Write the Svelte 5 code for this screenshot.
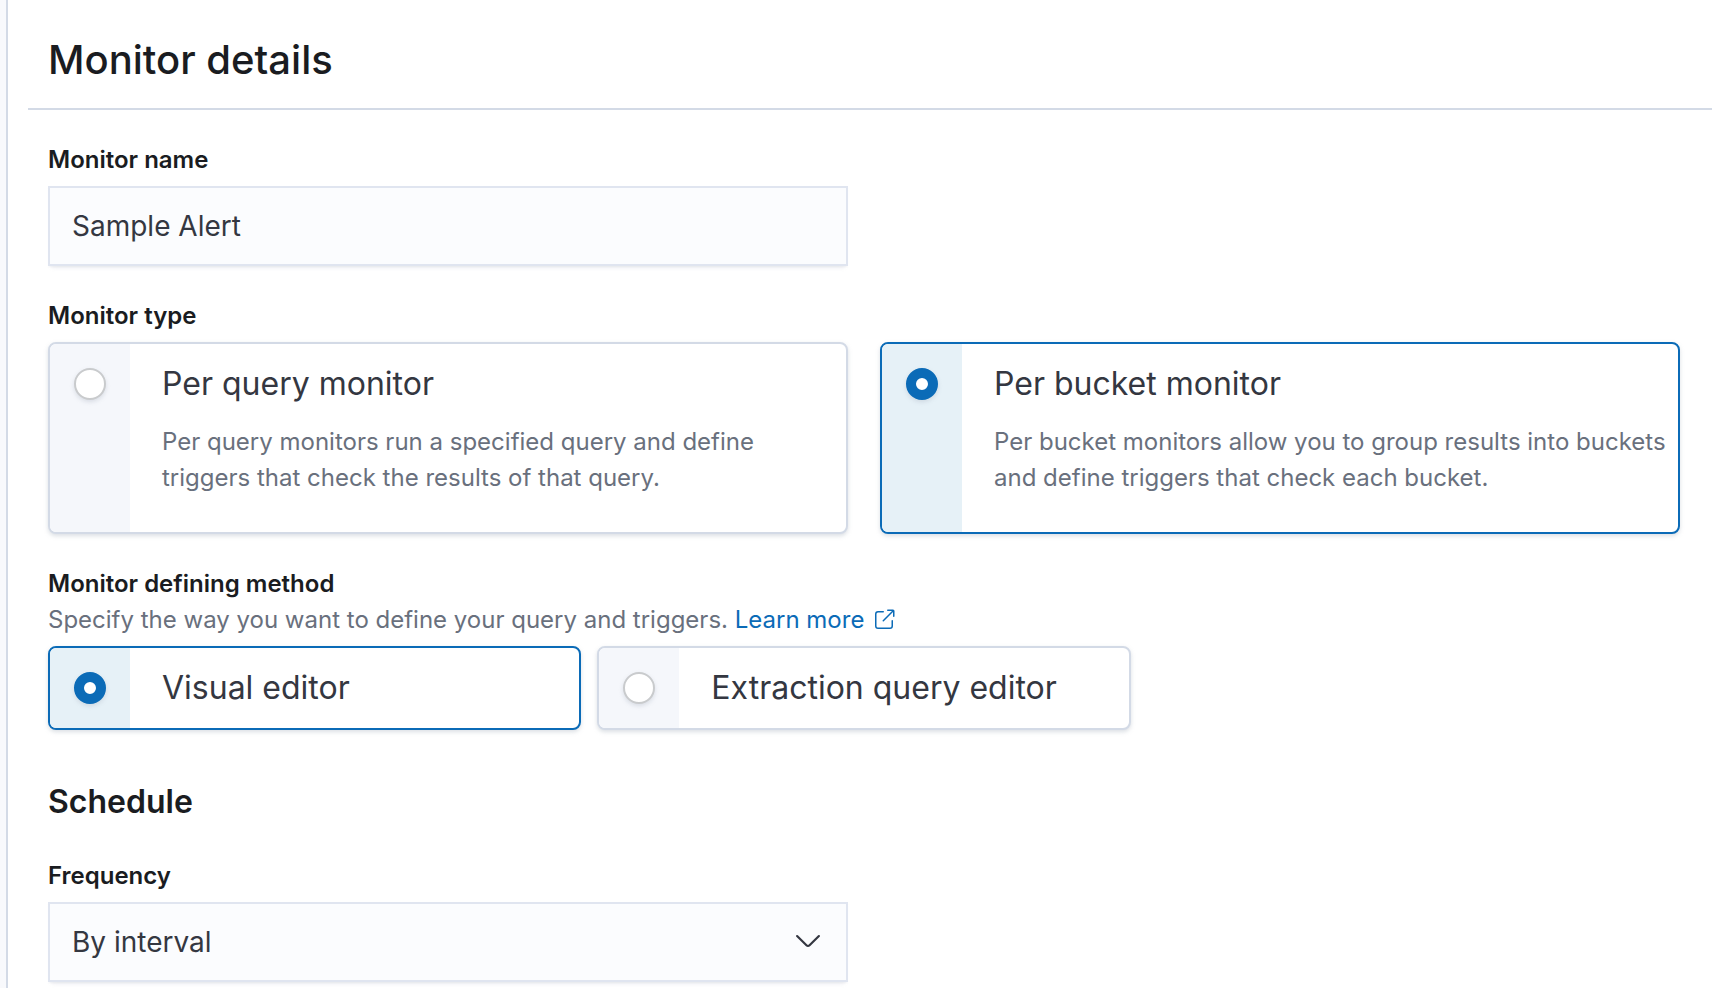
<script>
  let name = $state('Sample Alert');
  let type = $state('bucket');
  let method = $state('visual');
  let frequency = $state('interval');

  const types = [
    {
      value: 'query',
      title: 'Per query monitor',
      text: 'Per query monitors run a specified query and define triggers that check the results of that query.'
    },
    {
      value: 'bucket',
      title: 'Per bucket monitor',
      text: 'Per bucket monitors allow you to group results into buckets and define triggers that check each bucket.'
    }
  ];

  const methods = [
    { value: 'visual', title: 'Visual editor' },
    { value: 'extraction', title: 'Extraction query editor' }
  ];
</script>

<main class="panel">
  <header class="panel-header">
    <h1>Monitor details</h1>
  </header>

  <form class="panel-body">
    <div class="row narrow">
      <label class="label" for="monitor-name">Monitor name</label>
      <input id="monitor-name" class="field" type="text" bind:value={name} />
    </div>

    <fieldset class="row">
      <legend class="label">Monitor type</legend>
      <div class="cards two">
        {#each types as item}
          <div class="card" class:selected={type === item.value}>
            <div class="card-side">
              <input
                class="radio"
                type="radio"
                name="monitor-type"
                id="type-{item.value}"
                value={item.value}
                aria-describedby="type-{item.value}-text"
                bind:group={type}
              />
            </div>
            <div class="card-main">
              <label class="card-title" for="type-{item.value}">{item.title}</label>
              <p class="card-text" id="type-{item.value}-text">{item.text}</p>
            </div>
          </div>
        {/each}
      </div>
    </fieldset>

    <div class="row" role="radiogroup" aria-labelledby="method-label">
      <div>
        <div class="label" id="method-label">Monitor defining method</div>
        <p class="hint">
          Specify the way you want to define your query and triggers.
          <a href="#learn-more">Learn more<svg class="popout" viewBox="0 0 16 16" aria-hidden="true"><path d="M13 8.5a.5.5 0 1 1 1 0V12a2 2 0 0 1-2 2H4a2 2 0 0 1-2-2V4a2 2 0 0 1 2-2h3.5a.5.5 0 0 1 0 1H4a1 1 0 0 0-1 1v8a1 1 0 0 0 1 1h8a1 1 0 0 0 1-1V8.5zm-5.12.339a.5.5 0 1 1-.706-.707L13.305 2H10.5a.5.5 0 1 1 0-1H14a1 1 0 0 1 1 1v3.5a.5.5 0 1 1-1 0V2.72L7.88 8.838z" /></svg></a>
        </p>
      </div>
      <div class="cards three">
        {#each methods as item}
          <div class="card" class:selected={method === item.value}>
            <div class="card-side">
              <input
                class="radio"
                type="radio"
                name="defining-method"
                id="method-{item.value}"
                value={item.value}
                bind:group={method}
              />
            </div>
            <div class="card-main">
              <label class="card-title" for="method-{item.value}">{item.title}</label>
            </div>
          </div>
        {/each}
      </div>
    </div>

    <section class="schedule">
      <h2>Schedule</h2>
      <div class="row narrow">
        <label class="label" for="frequency">Frequency</label>
        <div class="select">
          <select id="frequency" class="field" bind:value={frequency}>
            <option value="interval">By interval</option>
          </select>
          <svg class="chevron" viewBox="0 0 16 16" aria-hidden="true"><path d="M13.069 5.157L8.384 9.768a.546.546 0 01-.768 0L2.93 5.158a.552.552 0 00-.771 0 .53.53 0 000 .759l4.684 4.61c.641.631 1.672.63 2.312 0l4.684-4.61a.53.53 0 000-.76.552.552 0 00-.771 0z" /></svg>
        </div>
      </div>
    </section>
  </form>
</main>

<style>
  :global(body) {
    background: #f8f9fc;
    color: #343741;
    font-family: Inter, "Liberation Sans", sans-serif;
  }

  .panel {
    box-sizing: border-box;
    min-height: 100vh;
    margin-left: 6px;
    padding: 28px 0 6px 20px;
    border-left: 2px solid #d3dae6;
    background: #fff;
  }

  .panel-header {
    padding: 0 32px 16px 20px;
    border-bottom: 2px solid #d3dae6;
  }

  h1,
  h2 {
    margin: 0;
    color: #1a1c21;
  }

  h1 {
    font-size: 40px;
    font-weight: 500;
    line-height: 64px;
  }

  h2 {
    font-size: 32px;
    font-weight: 600;
    line-height: 48px;
  }

  .panel-body {
    display: flex;
    flex-direction: column;
    gap: 32px;
    padding: 32px 32px 0 20px;
  }

  .row {
    display: flex;
    flex-direction: column;
    gap: 8px;
    min-width: 0;
    margin: 0;
    padding: 0;
    border: 0;
  }

  .narrow {
    max-width: 800px;
  }

  .label {
    padding: 0;
    color: #1a1c21;
    font-size: 24px;
    font-weight: 600;
    line-height: 36px;
  }

  legend.label {
    margin-bottom: 8px;
  }

  .field {
    box-sizing: border-box;
    width: 100%;
    height: 80px;
    margin: 0;
    padding: 0 22px;
    border: 2px solid #e0e5f0;
    border-radius: 0;
    outline: none;
    appearance: none;
    background: #fbfcfe;
    box-shadow: 0 2px 2px -1px rgba(152, 162, 179, 0.15), 0 6px 4px -4px rgba(152, 162, 179, 0.15);
    color: #343741;
    font-family: inherit;
    font-size: 28px;
  }

  .cards {
    display: grid;
  }

  .two {
    grid-template-columns: repeat(2, minmax(0, 1fr));
    gap: 32px;
  }

  .three {
    grid-template-columns: repeat(3, minmax(0, 1fr));
    gap: 16px;
  }

  .card {
    display: flex;
    overflow: hidden;
    border: 2px solid #d3dae6;
    border-radius: 8px;
    background: #fff;
    box-shadow: 0 2px 4px rgba(152, 162, 179, 0.35);
  }

  .card-side {
    flex: 0 0 80px;
    display: flex;
    justify-content: center;
    padding-top: 24px;
    background: #f5f7fb;
  }

  .card.selected {
    border-color: #0b6bb7;
  }

  .selected .card-side {
    background: #e6f1f7;
  }

  .radio {
    box-sizing: border-box;
    width: 32px;
    height: 32px;
    margin: 0;
    appearance: none;
    border: 2px solid #c9cbcd;
    border-radius: 50%;
    background: #fff;
    box-shadow: 0 2px 4px rgba(152, 162, 179, 0.3);
  }

  .radio:checked {
    border: 10px solid #0b6bb7;
  }

  .card-main {
    flex: 1;
    min-width: 0;
    padding: 16px 8px 16px 32px;
  }

  .card-title {
    display: block;
    font-size: 32px;
    line-height: 48px;
  }

  .card-text {
    margin: 16px 0 20px;
    color: #69707d;
    font-size: 24px;
    line-height: 36px;
  }

  .hint {
    margin: 0;
    color: #69707d;
    font-size: 24px;
    line-height: 36px;
  }

  a {
    color: #0b6bb7;
    text-decoration: none;
  }

  svg {
    fill: currentColor;
  }

  .popout {
    width: 24px;
    height: 24px;
    margin-left: 8px;
    vertical-align: -4px;
  }

  .schedule {
    display: flex;
    flex-direction: column;
    gap: 32px;
    padding-top: 16px;
  }

  .select {
    position: relative;
  }

  .select .field {
    display: block;
    padding-right: 64px;
  }

  .chevron {
    position: absolute;
    top: 23px;
    right: 24px;
    width: 32px;
    height: 32px;
    pointer-events: none;
  }
</style>
